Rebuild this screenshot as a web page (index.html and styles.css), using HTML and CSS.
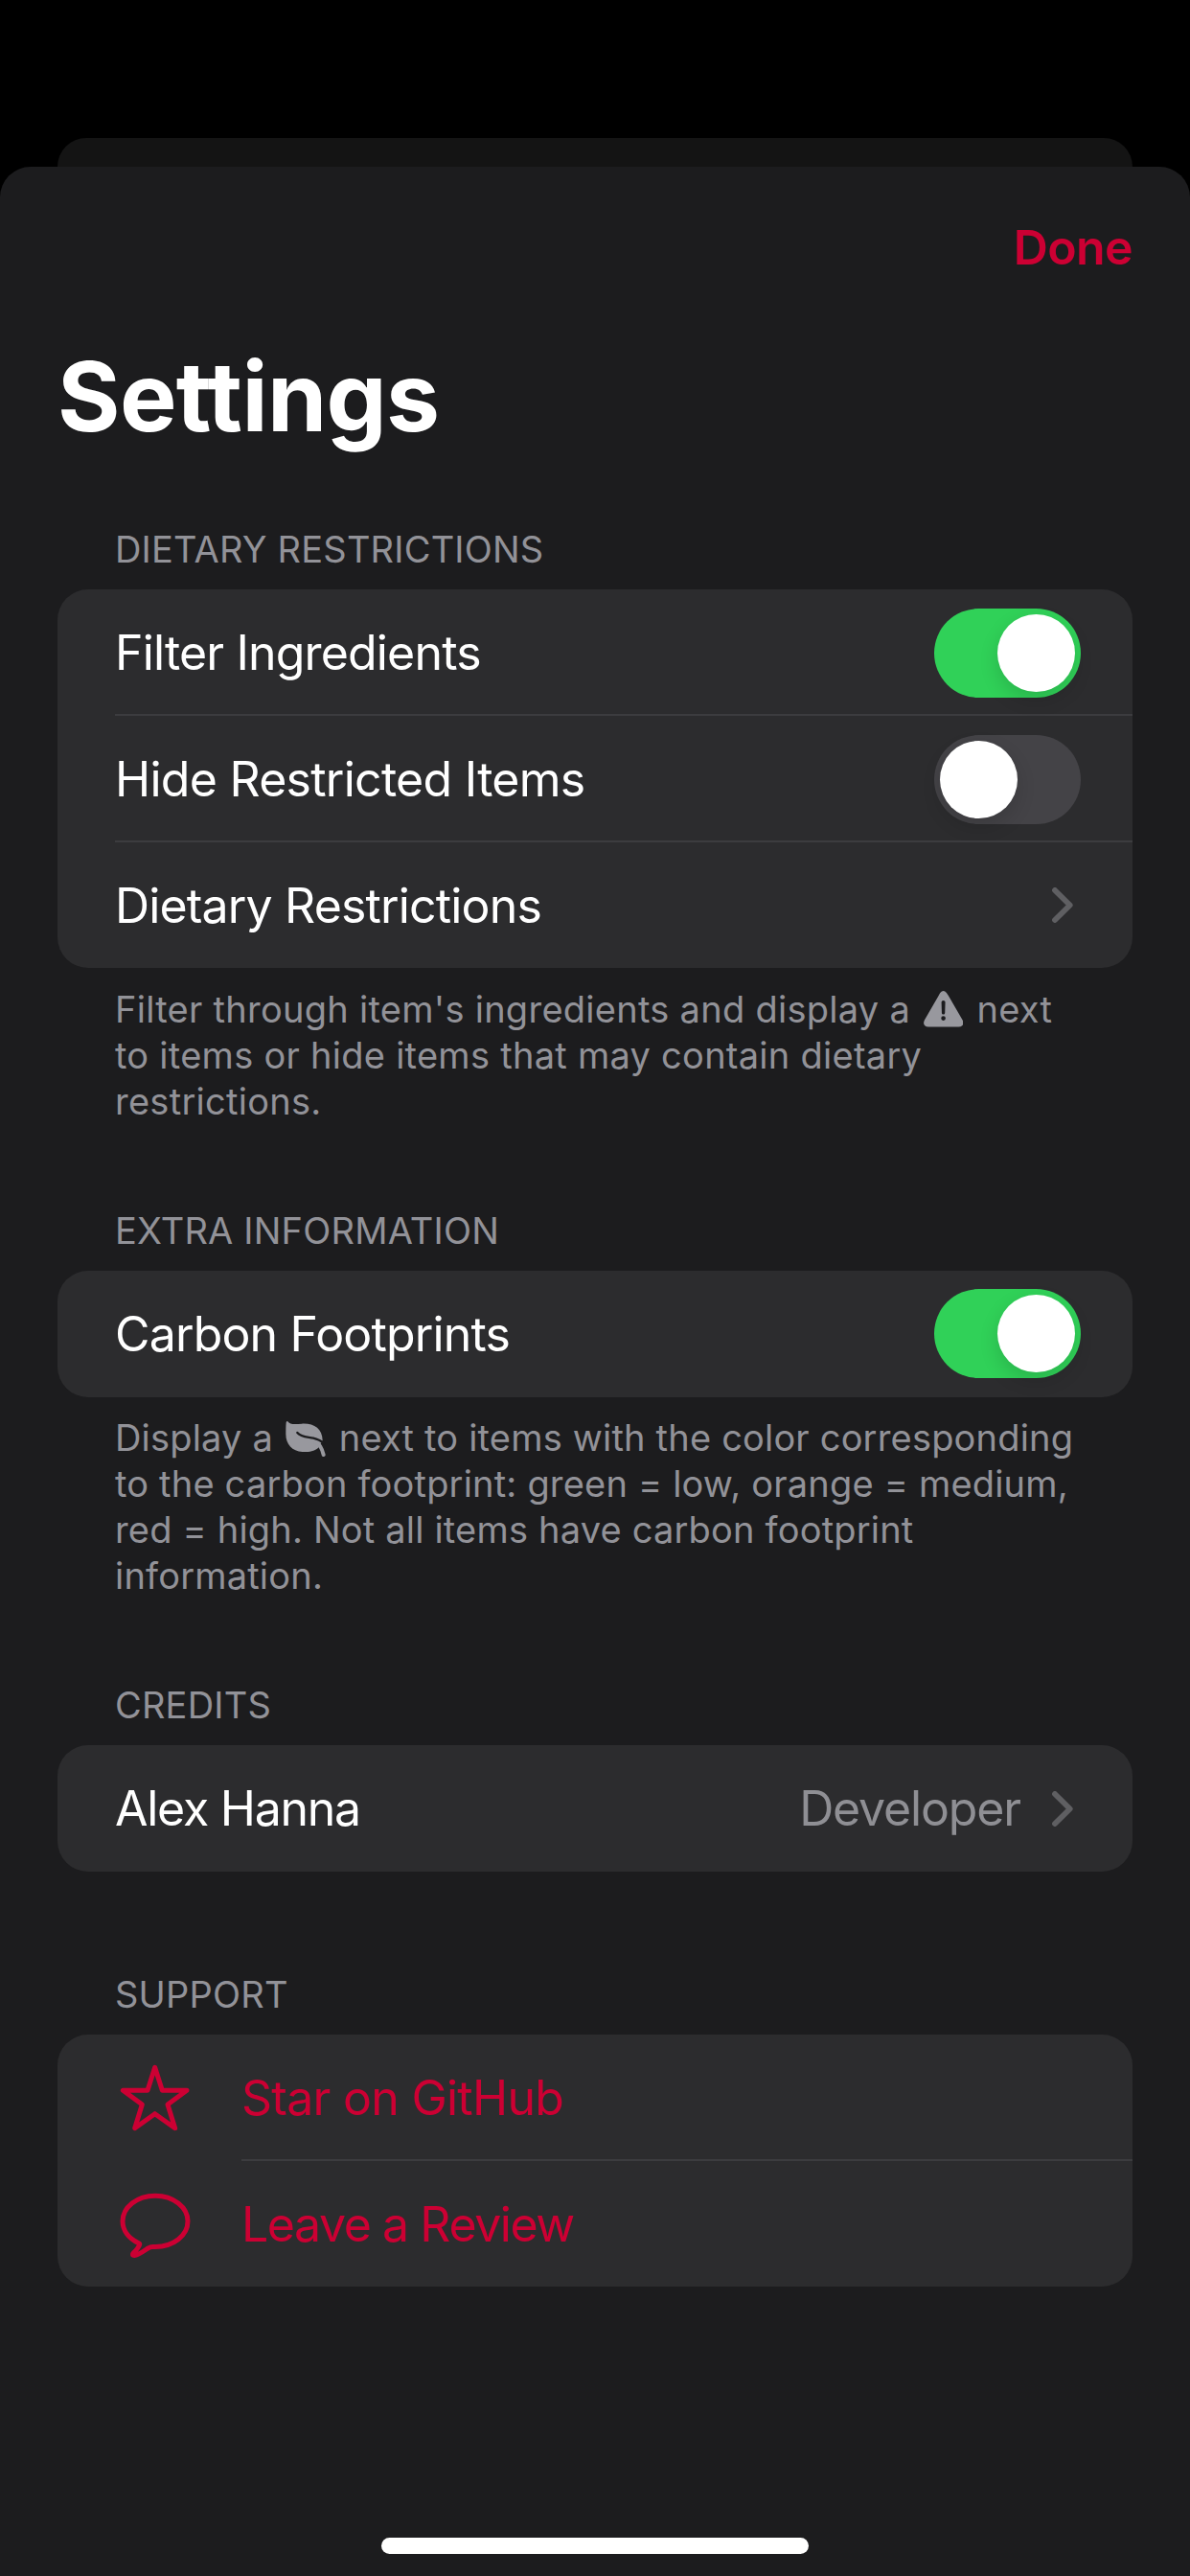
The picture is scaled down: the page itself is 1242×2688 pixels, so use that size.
FILE: index.html
```
<!DOCTYPE html>
<html lang="en">
<head>
<meta charset="utf-8">
<title>Settings</title>
<link rel="stylesheet" href="styles.css">
</head>
<body>
<div class="screen">
  <div class="back-sheet"></div>
  <main class="sheet">
    <nav class="nav"><span class="done">Done</span></nav>
    <h1 class="title">Settings</h1>

    <section class="section">
      <h2 class="section-header">DIETARY RESTRICTIONS</h2>
      <div class="card">
        <div class="row"><div class="cell divided">
          <span class="label">Filter Ingredients</span>
          <span class="toggle on"><span class="knob"></span></span>
        </div></div>
        <div class="row"><div class="cell divided">
          <span class="label wide">Hide Restricted Items</span>
          <span class="toggle"><span class="knob"></span></span>
        </div></div>
        <div class="row last"><div class="cell">
          <span class="label">Dietary Restrictions</span>
          <svg class="chevron" viewBox="0 0 22 37"><path d="M3 3 18.7 18.5 3 34"/></svg>
        </div></div>
      </div>
      <p class="footer loose">Filter through item's ingredients and display a <svg class="warning" viewBox="37 42 125 113"><path fill-rule="evenodd" d="M89 48Q99 36 109 48Q112 52 115 57L159 133Q165 145 158 151Q154 155 147 155H52Q45 155 41 151Q34 145 40 133L84 57Q87 51 89 48ZM93 77L94 111Q94 116 99 116T104 111L105 77Q105 72 99 72T93 77ZM99 121A7 7 0 0 0 99 135A7 7 0 0 0 99 121Z"/></svg> next<br>to items or hide items that may contain dietary<br>restrictions.</p>
    </section>

    <section class="section">
      <h2 class="section-header">EXTRA INFORMATION</h2>
      <div class="card">
        <div class="row"><div class="cell">
          <span class="label">Carbon Footprints</span>
          <span class="toggle on"><span class="knob"></span></span>
        </div></div>
      </div>
      <p class="footer">Display a <svg class="leaf" viewBox="39 37 126 111"><path class="leaf-body" d="M46 38C52 48 68 47 90 45C128 43 154 60 155 97L142 120C126 133 106 134 92 133C60 131 40 108 40 78C40 62 40 52 41 41Q43 35 46 38Z"/><path class="leaf-vein" d="M76 73C88 88 108 86 126 90C140 93 150 98 159 106"/><path class="leaf-stem" d="M134 103C147 108 153 122 158 142"/></svg> next to items with the color corresponding<br>to the carbon footprint: green = low, orange = medium,<br>red = high. Not all items have carbon footprint<br>information.</p>
    </section>

    <section class="section">
      <h2 class="section-header">CREDITS</h2>
      <div class="card">
        <div class="row"><div class="cell">
          <span class="label tight">Alex Hanna</span>
          <span class="value">Developer</span>
          <svg class="chevron" viewBox="0 0 22 37"><path d="M3 3 18.7 18.5 3 34"/></svg>
        </div></div>
      </div>
    </section>

    <section class="section spaced">
      <h2 class="section-header">SUPPORT</h2>
      <div class="card links">
        <div class="row">
          <svg class="icon" viewBox="30 21 252 252"><path d="M155 52L178 124H255L195 168L218 242L155 197L92 242L115 168L55 124H132Z"/></svg>
          <div class="cell divided"><span class="label wide">Star on GitHub</span></div>
        </div>
        <div class="row last">
          <svg class="icon" viewBox="30 415.5 252 252"><path d="M148 612C141 612 139 613 134 616C122 624 107 636 91 639C84 639 84 635 88 631C95 624 105 611 107 605C108 602 105 601 103 600C72 585 54 560 54 532C54 488 99 452 156 452C213 452 258 488 258 532C258 577 213 612 156 612Z"/></svg>
          <div class="cell"><span class="label tighter">Leave a Review</span></div>
        </div>
      </div>
    </section>
    <div class="home-indicator"></div>
  </main>
</div>
</body>
</html>
```
FILE: styles.css
```
* { box-sizing: border-box; }

body {
  margin: 0;
  background: #000;
  color: #fff;
  font-family: Inter, "Liberation Sans", sans-serif;
  font-weight: 440;
}

.screen {
  display: flex;
  flex-direction: column;
  width: 1242px;
  height: 2688px;
  padding-top: 144px;
  background: #000;
}

.back-sheet {
  flex: none;
  height: 30px;
  margin: 0 60px;
  border-radius: 30px 30px 0 0;
  background: #141414;
}

.sheet {
  display: flex;
  flex: 1;
  flex-direction: column;
  padding: 54px 60px 23px;
  border-radius: 32px 32px 0 0;
  background: #1c1c1e;
}

.nav {
  display: flex;
  justify-content: flex-end;
}

.done {
  color: #cc0033;
  font-size: 50px;
  font-weight: 620;
  line-height: 60px;
  letter-spacing: -0.6px;
}

.title {
  margin: 66px 0 75px;
  font-size: 100px;
  font-weight: 700;
  line-height: 120px;
  letter-spacing: -0.6px;
}

.section + .section { margin-top: 87px; }
.section + .section.spaced { margin-top: 104px; }

.section-header {
  margin: 0 0 18px 60px;
  color: #929298;
  font-size: 38px;
  font-weight: 410;
  line-height: 48px;
  letter-spacing: 0.2px;
}

.card {
  overflow: hidden;
  border-radius: 32px;
  background: #2c2c2e;
}

.row {
  display: flex;
  align-items: center;
  height: 132px;
  padding-left: 60px;
}

.row.last { height: 131px; }

.cell {
  display: flex;
  flex: 1;
  align-items: center;
  height: 100%;
}

.cell.divided { box-shadow: inset 0 -2px 0 #3c3c3f; }

.label {
  flex: 1;
  font-size: 50px;
  line-height: 60px;
  letter-spacing: -0.84px;
}

.label.wide { letter-spacing: -0.73px; }
.label.tight { letter-spacing: -1.25px; }
.label.tighter { letter-spacing: -1.42px; }

.value {
  margin-right: 33px;
  color: #8f8f94;
  font-size: 50px;
  line-height: 60px;
  letter-spacing: -1.15px;
}

.toggle {
  display: flex;
  width: 153px;
  height: 93px;
  margin-right: 54px;
  padding: 6px;
  border-radius: 47px;
  background: #444347;
}

.toggle.on {
  justify-content: flex-end;
  background: #30d158;
}

.knob {
  width: 81px;
  height: 81px;
  border-radius: 50%;
  background: #fff;
  box-shadow: 0 8px 20px rgba(0, 0, 0, 0.14);
}

.chevron {
  width: 22px;
  height: 37px;
  margin-right: 62px;
  fill: none;
  stroke: #5f5f62;
  stroke-width: 5.8;
  stroke-linecap: round;
  stroke-linejoin: round;
}

.footer {
  margin: 18.5px 0 0 60px;
  color: #929298;
  font-size: 38px;
  line-height: 48px;
  letter-spacing: 0.19px;
  white-space: nowrap;
}

.footer.loose { letter-spacing: 0.27px; }

.warning {
  width: 41.5px;
  height: 37.6px;
  margin: 0 3px;
  vertical-align: -5px;
  fill: #98989e;
}

.leaf {
  width: 42px;
  height: 37px;
  margin: 0 2.5px;
  vertical-align: -5.5px;
}

.leaf-body { fill: #98989e; }

.leaf-vein,
.leaf-stem {
  fill: none;
  stroke-linecap: round;
}

.leaf-vein {
  stroke: #1c1c1e;
  stroke-width: 7;
}

.leaf-stem {
  stroke: #98989e;
  stroke-width: 12;
}

.links { color: #cc0033; }

.icon {
  width: 84px;
  height: 84px;
  margin-right: 48px;
  fill: none;
  stroke: #cc0033;
  stroke-width: 15;
  stroke-linejoin: round;
}

.home-indicator {
  width: 446px;
  height: 17px;
  margin: auto auto 0;
  border-radius: 9px;
  background: #fff;
}
```
